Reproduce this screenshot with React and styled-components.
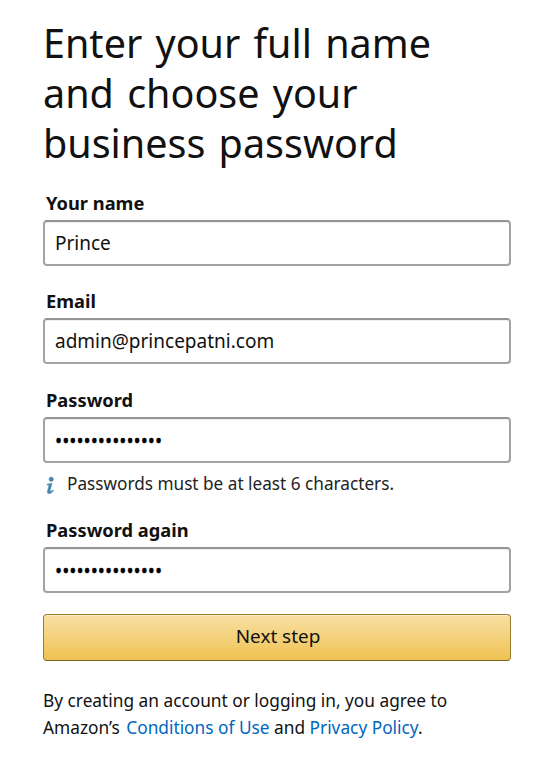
import React from 'react'
import styled, { createGlobalStyle } from "styled-components"

const GlobalStyle = createGlobalStyle`
  html, body {
    margin: 0;
    padding: 0;
    background: #fff;
  }
  body {
    font-family: "Noto Sans", "Open Sans", Arial, sans-serif;
    color: #111;
  }
`

function InfoIcon() {
  return (
    <HintIcon viewBox="0 0 9 19" aria-hidden="true">
      <circle cx="5.2" cy="3.2" r="2.2" />
      <path d="M1 8.2 L6 7.2 L4.2 14.5 C4 15.6 4.8 15.6 7.2 14 L7.6 14.6 C5.5 17.4 3.6 18 2.3 17.6 C1.2 17.2 1.2 16 1.6 14.5 L2.9 9.7 C3 9 2.4 8.8 1.1 9 Z" />
    </HintIcon>
  )
}

function Field({label, value, type = "text", children}) {
  return (
    <FieldBox>
      <Label>{label}</Label>
      <Input type={type} defaultValue={value} />
      {children}
    </FieldBox>
  )
}

function App() {
  return (
    <Page>
      <GlobalStyle />
      <Title>Enter your full name and choose your business password</Title>
      <Field label="Your name" value="Prince" />
      <Field label="Email" value="admin@princepatni.com" />
      <Field label="Password" type="password" value="123456789012345">
        <Hint>
          <InfoIcon />
          Passwords must be at least 6 characters.
        </Hint>
      </Field>
      <Field label="Password again" type="password" value="123456789012345" />
      <NextButton>Next step</NextButton>
      <Legal>
        By creating an account or logging in, you agree to<br />
        Amazon’s <a href="#">Conditions of Use</a> and <a href="#">Privacy Policy</a>.
      </Legal>
    </Page>
  )
}

export default App

const Page = styled.div`
  width: 468px;
  height: 760px;
  margin-left: 43px;
  padding-top: 18px;
  box-sizing: border-box;
  overflow: hidden;
`
const Title = styled.h1`
  margin: 0 0 23px;
  width: 440px;
  font-size: 39.5px;
  line-height: 50px;
  font-weight: 400;
  word-spacing: 3px;
  color: #111;
`
const FieldBox = styled.div`
  margin-bottom: 23.4px;
`
const Label = styled.label`
  display: block;
  margin: 0 0 5px 3px;
  font-size: 18.3px;
  line-height: 24px;
  font-weight: 700;
  color: #111;
`
const Input = styled.input`
  display: block;
  width: 100%;
  height: 46px;
  box-sizing: border-box;
  padding: 0 10px;
  border: 2px solid #a3a3a3;
  border-top-color: #949494;
  border-radius: 4px;
  background: #fff;
  box-shadow: inset 0 1px 1px rgba(0, 0, 0, 0.07);
  font-family: inherit;
  font-size: 19px;
  color: #111;
  outline: none;

  &[type="password"] {
    padding-top: 3px;
    color: #000;
    -webkit-text-stroke: 0.3px #000;
  }
`
const Hint = styled.div`
  display: flex;
  align-items: center;
  height: 24px;
  margin: 9px 0 -1.3px;
  font-size: 17.2px;
  color: #222;
`
const HintIcon = styled.svg`
  flex: none;
  width: 9px;
  height: 19px;
  margin: 3px 12px 0 3px;
  fill: #4b87ad;
  stroke: #4b87ad;
  stroke-width: 0.5;
`
const NextButton = styled.button`
  display: block;
  width: 100%;
  height: 47px;
  margin-top: -2.5px;
  padding: 0 0 2px 2px;
  border: 1px solid #9c7e31;
  border-bottom-color: #7d6425;
  border-radius: 4px;
  background: linear-gradient(to bottom, #f8dfa4, #efc352);
  box-shadow: inset 0 1px 0 rgba(255, 255, 255, 0.4);
  font-family: inherit;
  font-size: 18.9px;
  color: #111;
`
const Legal = styled.p`
  margin: 26px 0 0;
  font-size: 17.3px;
  line-height: 27px;
  color: #111;

  a {
    color: #0066c0;
    text-decoration: none;
  }

  a:first-of-type {
    margin-left: 2px;
  }
`
